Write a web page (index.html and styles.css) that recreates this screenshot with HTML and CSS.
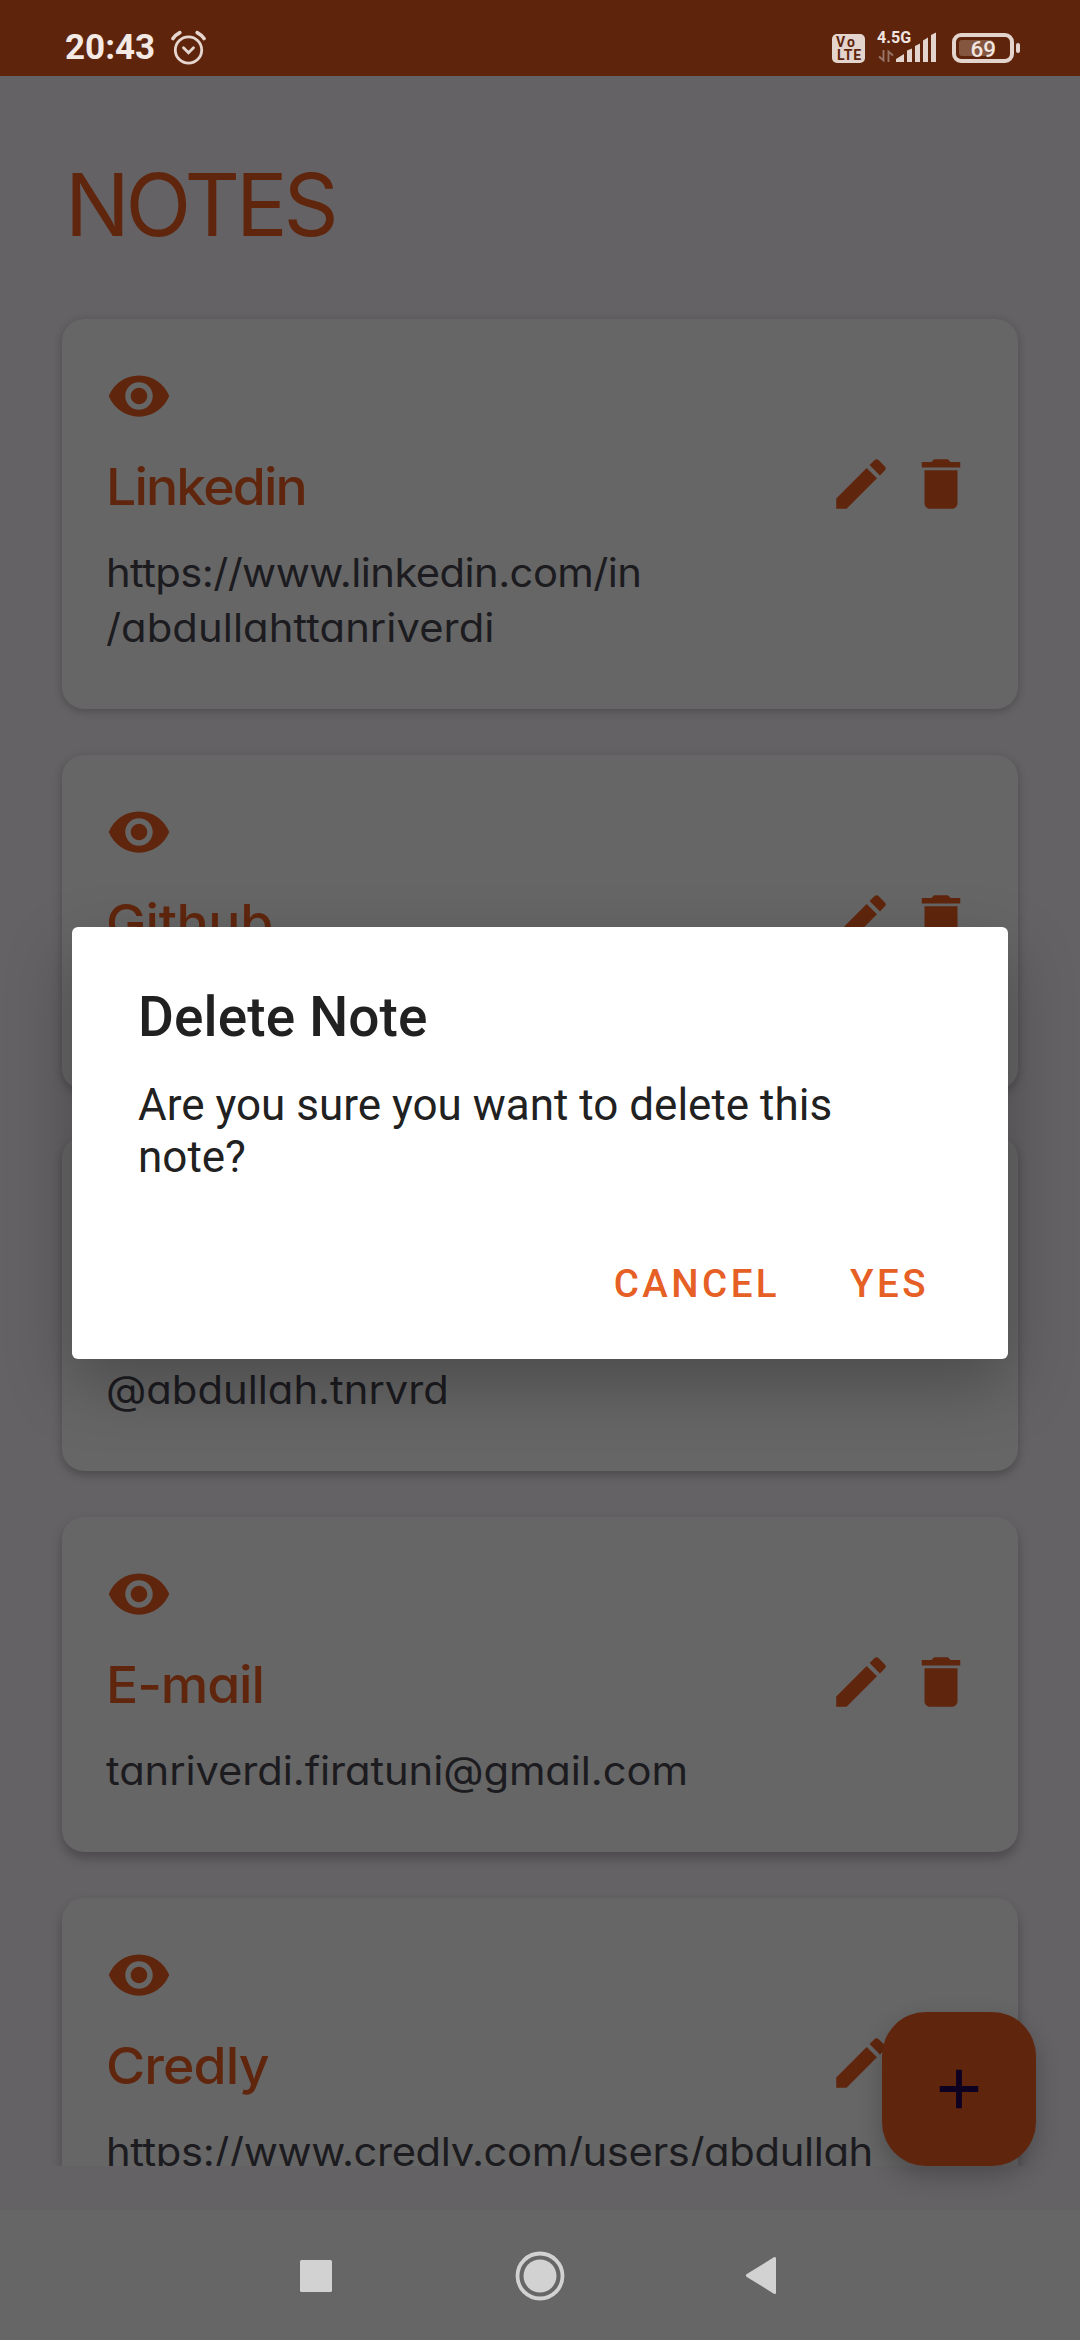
FILE: index.html
```html
<!DOCTYPE html>
<html lang="en">
<head>
<meta charset="utf-8">
<title>Notes</title>
<link rel="stylesheet" href="styles.css">
</head>
<body>
<svg class="sprite" aria-hidden="true">
  <symbol id="eye" viewBox="0 0 24 24"><path d="M12 4.5C7 4.5 2.73 7.61 1 12c1.73 4.39 6 7.5 11 7.5s9.27-3.11 11-7.5c-1.73-4.39-6-7.5-11-7.5zM12 17c-2.76 0-5-2.24-5-5s2.24-5 5-5 5 2.24 5 5-2.24 5-5 5zm0-8c-1.66 0-3 1.34-3 3s1.34 3 3 3 3-1.34 3-3-1.34-3-3-3z"/></symbol>
  <symbol id="pencil" viewBox="0 0 24 24"><path d="M3 17.25V21h3.75L17.81 9.94l-3.75-3.75L3 17.25zM20.71 7.04c.39-.39.39-1.02 0-1.41l-2.34-2.34c-.39-.39-1.02-.39-1.41 0l-1.83 1.83 3.75 3.75 1.83-1.83z"/></symbol>
  <symbol id="bin" viewBox="0 0 24 24"><path d="M6 19c0 1.1.9 2 2 2h8c1.1 0 2-.9 2-2V7H6v12zM19 4h-3.5l-1-1h-5l-1 1H5v2h14V4z"/></symbol>
</svg>
<div class="screen">
  <header class="status">
    <span class="clock">20:43</span>
    <svg class="alarm" width="36" height="36" viewBox="0 0 36 36" fill="none" stroke="#e6d6d0" stroke-linecap="round">
      <circle cx="18.5" cy="20" r="13.2" stroke-width="2.8"/>
      <path d="M13.5 17.8l5 5 5-5" stroke-width="2.8"/>
      <path d="M3 8.600c1.800-2.600 4-4.600 6.800-6M34 8.600c-1.800-2.600-4-4.600-6.800-6" stroke-width="3.600"/>
    </svg>
    <svg class="indicators" width="190" height="36" viewBox="0 0 190 36" fill="#e3d4ce">
      <rect x="2" y="4" width="33" height="29" rx="5"/>
      <text class="volte" x="6" y="16.500" textLength="19">Vo</text>
      <text class="volte" x="7" y="29.500" textLength="24">LTE</text>
      <text class="net" x="47" y="13">4.5G</text>
      <g fill="none" stroke="#987468" stroke-width="1.900"><path d="M53.500 20v10.500l-4.500-4M58.500 32V21.500l4.500 4"/></g>
      <path d="M66 32v-3l8-5v8zM77 32V20.500l5-2V32zM85 32V16l5-2.500V32zM93 32V10.500l5-3V32zM101 32V5l5-2.500V32z"/>
      <rect x="129" y="10" width="34" height="16" rx="3" fill="#84553f"/>
      <rect x="124" y="5" width="58" height="26" rx="7" fill="none" stroke="#e3d4ce" stroke-width="4"/>
      <rect x="186" y="13" width="4" height="10" rx="2"/>
      <text class="level" x="140.500" y="27">69</text>
    </svg>
  </header>

  <main class="page">
    <h1 class="heading">NOTES</h1>
    <div class="notes">
      <article class="note linkedin">
        <svg class="icon"><use href="#eye"/></svg>
        <div class="row"><h2>Linkedin</h2><svg class="icon"><use href="#pencil"/></svg><svg class="icon"><use href="#bin"/></svg></div>
        <p><span class="l1">https://www.linkedin.com/in</span><br><span class="l2">/abdullahttanriverdi</span></p>
      </article>
      <article class="note github">
        <svg class="icon"><use href="#eye"/></svg>
        <div class="row"><h2>Github</h2><svg class="icon"><use href="#pencil"/></svg><svg class="icon"><use href="#bin"/></svg></div>
        <p>&nbsp;</p>
      </article>
      <article class="note instagram">
        <svg class="icon"></svg>
        <div class="row"></div>
        <p>@abdullah.tnrvrd</p>
      </article>
      <article class="note email">
        <svg class="icon"><use href="#eye"/></svg>
        <div class="row"><h2>E-mail</h2><svg class="icon"><use href="#pencil"/></svg><svg class="icon"><use href="#bin"/></svg></div>
        <p>tanriverdi.firatuni@gmail.com</p>
      </article>
      <article class="note credly">
        <svg class="icon"><use href="#eye"/></svg>
        <div class="row"><h2>Credly</h2><svg class="icon"><use href="#pencil"/></svg><svg class="icon"><use href="#bin"/></svg></div>
        <p>https://www.credly.com/users/abdullah</p>
      </article>
    </div>
  </main>

  <nav class="navbar">
    <svg width="50" height="50" viewBox="0 0 50 50"><rect x="9" y="9" width="32" height="32" rx="1.500"/></svg>
    <svg width="50" height="50" viewBox="0 0 50 50"><circle cx="25" cy="25" r="16.500"/><circle class="ring" cx="25" cy="25" r="22.500"/></svg>
    <svg width="50" height="50" viewBox="0 0 50 50"><path d="M7.800 23.100 34.800 6.300q2.200-1.200 2.200 1.200v34q0 2.400-2.200 1.200L7.800 25.900q-2-1.400 0-2.800z"/></svg>
  </nav>

  <div class="fab"><svg width="66" height="66" viewBox="0 0 24 24"><path d="M19 13.050h-5.950V19h-2.100v-5.950H5v-2.100h5.950V5h2.100v5.950H19z"/></svg></div>

  <section class="dialog" role="dialog">
    <h3>Delete Note</h3>
    <p>Are you sure you want to delete this<br>note?</p>
    <div class="actions"><span>CANCEL</span><span>YES</span></div>
  </section>
</div>
</body>
</html>
```
FILE: styles.css
```css
* { box-sizing: border-box; }
body, h1, h2, h3, p { margin: 0; }
.sprite { display: none; }

.screen {
  position: relative;
  display: flex;
  flex-direction: column;
  width: 1080px;
  height: 2340px;
  overflow: hidden;
  background: #656265;
  font-family: Roboto, sans-serif;
}

/* Status bar */
.status {
  display: flex;
  flex: 0 0 76px;
  align-items: flex-start;
  padding: 30px 60px 0 65px;
  background: #5f250c;
}
.clock {
  width: 105px;
  font-size: 35px;
  font-weight: 700;
  line-height: 36px;
  color: #f3e9e5;
}
.indicators { margin-left: auto; overflow: visible; }
.volte, .net { font-weight: 700; }
.volte { font-size: 14px; fill: #5f250c; }
.net { font-size: 16px; letter-spacing: .1px; fill: #f0e5e0; }
.level { font-size: 22.500px; font-weight: 500; fill: #f0e5e0; }

/* Notes list */
.page {
  display: flex;
  flex-direction: column;
  flex: 0 0 2134px;
  padding-bottom: 44px;
  font-family: Inter, sans-serif;
  font-feature-settings: "cv11", "calt" 0;
}
.heading {
  flex: 0 0 243px;
  padding: 77px 0 0 65px;
  font-size: 86px;
  font-weight: 400;
  line-height: 104px;
  letter-spacing: -4.200px;
  color: #60260d;
}
/* The extra 20px on top leave room for the first card's shadow */
.notes {
  display: flex;
  flex-direction: column;
  flex: 0 0 1867px;
  gap: 46px;
  margin-top: -20px;
  padding: 20px 62px 0;
  overflow: hidden;
}
.note {
  flex: none;
  padding: 44px;
  padding-bottom: 54px;
  border-radius: 22px;
  background: #666;
  box-shadow: 0 2px 9px rgba(0, 0, 0, .24);
}
.note:nth-child(2) { box-shadow: 0 3px 10px rgba(0, 0, 0, .25); }
.note:nth-child(3) { box-shadow: 0 4px 10px rgba(0, 0, 0, .25); }
.note:nth-child(n+4) { box-shadow: 0 6px 11px rgba(0, 0, 0, .26); }
.icon { display: block; flex: none; width: 66px; height: 66px; fill: #60260d; }
.row {
  display: flex;
  gap: 14px;
  height: 66px;
  margin: 22px 0 28px;
}
.row h2 {
  flex: 1;
  font-size: 51px;
  font-weight: 540;
  line-height: 71px;
  color: #60260d;
  transform: scaleX(1.05);
  transform-origin: left;
}
.note p {
  font-size: 39px;
  line-height: 55px;
  color: #1c1b20;
  white-space: nowrap;
  transform: scaleX(1.07);
  transform-origin: left;
}
.linkedin h2 { letter-spacing: -1.800px; }
.github h2 { letter-spacing: -.4px; }
.email h2 { letter-spacing: -1.100px; }
.credly h2 { letter-spacing: -.9px; }
.l1 { letter-spacing: -.53px; }
.l2 { letter-spacing: .07px; }
.instagram p { letter-spacing: 0; }
.email p { letter-spacing: -.08px; }
.credly p { letter-spacing: -.35px; }

/* System navigation */
.navbar {
  display: flex;
  flex: 0 0 130px;
  justify-content: center;
  gap: 174px;
  padding-top: 40.500px;
  background: #666;
  fill: #d2d2d2;
}
.navbar .ring { fill: none; stroke: #d2d2d2; stroke-width: 3.800px; }

/* Floating add button */
.fab {
  position: absolute;
  right: 44px;
  bottom: 174px;
  display: grid;
  place-items: center;
  width: 154px;
  height: 154px;
  border-radius: 44px;
  background: #60260d;
  fill: #0d0021;
  box-shadow: 0 10px 24px rgba(0, 0, 0, .24);
}

/* Confirmation dialog */
.dialog {
  position: absolute;
  top: 927px;
  left: 72px;
  width: 936px;
  height: 432px;
  padding: 58px 79px 0 66px;
  border-radius: 6px;
  background: #fff;
  color: #212121;
  box-shadow: 0 26px 66px rgba(0, 0, 0, .26);
}
.dialog h3 {
  font-size: 55px;
  font-weight: 500;
  line-height: 64px;
  letter-spacing: .12px;
}
.dialog p {
  margin-top: 30px;
  font-size: 44px;
  line-height: 52px;
  white-space: nowrap;
}
.actions {
  display: flex;
  justify-content: flex-end;
  gap: 70px;
  margin-top: 78px;
  font-size: 38.500px;
  font-weight: 500;
  line-height: 46px;
  letter-spacing: 3.440px;
  color: #e66026;
}
```
